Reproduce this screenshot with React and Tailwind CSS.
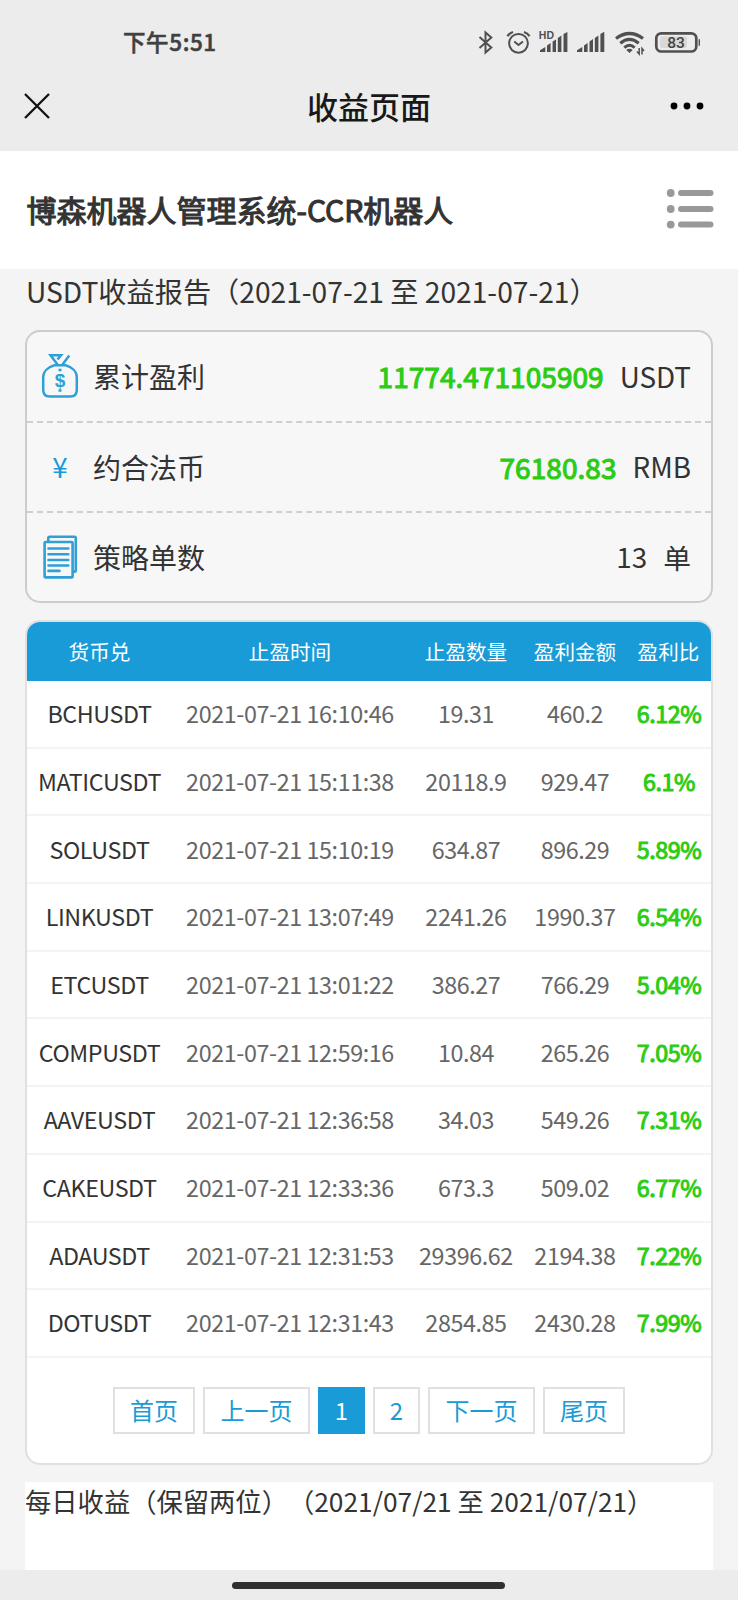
const rows = [
  ["BCHUSDT", "2021-07-21 16:10:46", "19.31", "460.2", "6.12%"],
  ["MATICUSDT", "2021-07-21 15:11:38", "20118.9", "929.47", "6.1%"],
  ["SOLUSDT", "2021-07-21 15:10:19", "634.87", "896.29", "5.89%"],
  ["LINKUSDT", "2021-07-21 13:07:49", "2241.26", "1990.37", "6.54%"],
  ["ETCUSDT", "2021-07-21 13:01:22", "386.27", "766.29", "5.04%"],
  ["COMPUSDT", "2021-07-21 12:59:16", "10.84", "265.26", "7.05%"],
  ["AAVEUSDT", "2021-07-21 12:36:58", "34.03", "549.26", "7.31%"],
  ["CAKEUSDT", "2021-07-21 12:33:36", "673.3", "509.02", "6.77%"],
  ["ADAUSDT", "2021-07-21 12:31:53", "29396.62", "2194.38", "7.22%"],
  ["DOTUSDT", "2021-07-21 12:31:43", "2854.85", "2430.28", "7.99%"],
];

function StatusIcons() {
  return (
    <svg width="230" height="32" viewBox="470 26 230 32" fill="none" stroke="#505050" className="block shrink-0">
      <path d="M479.5 37 L491.3 47.5 L485.5 52.5 V32.5 L491.3 37.5 L479.5 48" strokeWidth="2" />
      <circle cx="518.5" cy="43.3" r="9.4" strokeWidth="2" />
      <path d="M514.3 41.5 L518.5 45 L523 41.5" strokeWidth="2" />
      <path d="M507.5 36.3 Q509 33.5 513 32 M529.5 36.3 Q528 33.5 524 32" strokeWidth="2.3" />
      <text x="538.7" y="39" fontSize="10.5" fontWeight="700" fill="#505050" stroke="none" fontFamily="Liberation Sans, sans-serif" textLength="15.5">HD</text>
      <g fill="#505050" stroke="none">
        <path d="M540 52 V50.3 L545.3 47 V52 Z M547 52 V45.5 L550.6 43 V52 Z M552.6 52 V41.5 L556 39.5 V52 Z M557.8 52 V38 L561.4 35.6 V52 Z M563.5 52 V34 L567.4 32 V52 Z" />
        <path d="M577 52 V50.3 L582.3 47 V52 Z M584 52 V45.5 L587.6 43 V52 Z M589.5 52 V41.5 L593 39 V52 Z M594.8 52 V38 L598.4 35.5 V52 Z M600.4 52 V34 L604.3 31.8 V52 Z" />
      </g>
      <path d="M616 38.5 Q629.5 28.5 643 38.5" strokeWidth="3.2" />
      <path d="M620.3 43.3 Q629.5 35.5 638.7 43.3" strokeWidth="3.2" />
      <path d="M624.3 47.6 Q629.5 42.8 634.7 47.6" strokeWidth="3" />
      <path d="M626.3 50 L629.5 53 L632.7 50 Q629.5 47.5 626.3 50 Z" fill="#505050" stroke="none" />
      <path d="M639.2 48 V54 L637 51.5 M642 54.5 V48.5 L644 51" strokeWidth="1.5" />
      <rect x="656.3" y="33.3" width="40" height="18.2" rx="5" strokeWidth="2.7" />
      <rect x="660" y="36.5" width="27" height="11.5" rx="2" fill="#d8d8d8" stroke="none" />
      <text x="676" y="48.3" fontSize="15.5" fontWeight="500" textAnchor="middle" fill="#444" stroke="none" fontFamily="Roboto, sans-serif">83</text>
      <path d="M699.8 39.3 V45.7" strokeWidth="2.4" />
    </svg>
  );
}

function MoneyBag() {
  return (
    <svg width="40" height="48" viewBox="0 0 40 48" fill="none" stroke="#2f9fd6" strokeWidth="2.5" className="block">
      <path d="M14.5 13.3 C8 15 3.2 19.5 3.2 25.5 V38 Q3.2 44.6 10 44.6 H30 Q36.8 44.6 36.8 38 V25.5 C36.8 19.5 32 15 25.5 13.3 Z" />
      <path d="M17.5 12.5 L10.5 3.3 H21 L17.5 7.5 M22.5 12.5 L29.3 3.5" />
      <text x="20" y="34.8" fontSize="19" fontWeight="700" fill="#2f9fd6" stroke="none" textAnchor="middle" fontFamily="Liberation Sans, sans-serif">$</text>
      <path d="M20 16.8 V19.2 M20 37.2 V39.8" strokeWidth="3" />
    </svg>
  );
}

function Papers() {
  return (
    <svg width="40" height="48" viewBox="0 0 40 48" fill="none" stroke="#2f9fd6" strokeWidth="2.6" className="block">
      <path d="M8.3 9 V5 Q8.3 3.7 9.5 3.7 H34.5 Q35.8 3.7 35.8 5 V37.3 Q35.8 38.6 34.5 38.6 H32" />
      <rect x="4.6" y="9" width="28" height="35.4" rx="1" />
      <path d="M8.5 15.5 H28.3 M8.5 21.3 H28.3 M8.5 27 H28.3 M8.5 32.5 H28.3 M8.5 37.9 H19.5" strokeLinecap="round" />
    </svg>
  );
}

function SummaryRow({ icon, label, value, unit, green, last }) {
  return (
    <div className={"flex items-center pl-[13px] pr-[20px] " + (last ? "h-[88px]" : "h-[90.5px] border-b-2 border-dashed border-[#cfcfcf]")}>
      <div className="flex w-10 justify-center">{icon}</div>
      <div className="ml-[13px] text-[28px]">{label}</div>
      <div className="ml-auto flex items-center">
        <span className={green ? "text-[28px] tracking-[0.05px] text-[#2ccc14] [-webkit-text-stroke:1.1px_#2ccc14]" : "text-[27.8px]"}>{value}</span>
        <span className="ml-[16px] pt-px text-[27.8px]">{unit}</span>
      </div>
    </div>
  );
}

const cols = "grid grid-cols-[145px_236px_116px_102px_85px] items-center text-center";

function PageButton({ children, width, active }) {
  return (
    <div className={"flex h-[47px] items-center justify-center text-[24px] " + width + (active ? " bg-[#189bd6] text-white" : " border-2 border-[#e0e0e0] text-[#189bd6]")}>
      {children}
    </div>
  );
}

export default function App() {
  return (
    <div className="flex h-[1600px] w-[738px] flex-col overflow-hidden bg-[#f4f4f4] font-['Noto_Sans_CJK_SC',sans-serif] leading-none whitespace-nowrap text-[#333]">
      <header className="h-[151px] shrink-0 bg-[#ececec]">
        <div className="flex h-[84px] items-end justify-between pr-[38px] pb-[26px] pl-[123px]">
          <div className="flex h-8 items-center pb-[2px] text-[22.5px] font-medium tracking-[0.6px] text-[#404040] [-webkit-text-stroke:0.5px_#404040]">下午5:51</div>
          <StatusIcons />
        </div>
        <div className="grid h-[44px] grid-cols-[1fr_auto_1fr] items-center px-[24px]">
          <svg width="26" height="26" viewBox="0 0 26 26" stroke="#111" strokeWidth="2.3" fill="none"><path d="M1 1 L25 25 M25 1 L1 25" /></svg>
          <div className="pb-[2px] text-[31px] font-medium text-[#181818]">收益页面</div>
          <svg width="34" height="8" viewBox="0 0 34 8" className="mr-[10px] justify-self-end" fill="#000"><circle cx="4" cy="4" r="3.4" /><circle cx="17" cy="4" r="3.4" /><circle cx="30" cy="4" r="3.4" /></svg>
        </div>
      </header>

      <section className="flex h-[118px] shrink-0 items-center justify-between bg-white pr-[24px] pb-[2px] pl-[26.5px]">
        <h1 className="text-[30px] font-normal [-webkit-text-stroke:1.1px_#333]">博森机器人管理系统-CCR机器人</h1>
        <svg width="48" height="40" viewBox="0 0 48 40" fill="#999" className="block">
          <circle cx="4.7" cy="4" r="3.9" /><rect x="12" y="1" width="35.5" height="6" rx="3" />
          <circle cx="4.7" cy="20" r="3.9" /><rect x="12" y="17" width="35.5" height="6" rx="3" />
          <circle cx="4.7" cy="35.6" r="3.9" /><rect x="12" y="32.6" width="35.5" height="6" rx="3" />
        </svg>
      </section>

      <main className="flex min-h-0 flex-1 flex-col px-[25px]">
        <h2 className="flex h-[61px] shrink-0 items-start pt-[8px] pl-px text-[28.2px]">USDT收益报告（2021-07-21 至 2021-07-21）</h2>
        <div className="shrink-0 rounded-[15px] border-2 border-[#cccccc] bg-[#f7f7f7]">
          <SummaryRow icon={<MoneyBag />} label="累计盈利" value="11774.471105909" unit="USDT" green />
          <SummaryRow icon={<span className="pt-px text-[27.8px] text-[#189bd6]">¥</span>} label="约合法币" value="76180.83" unit="RMB" green />
          <SummaryRow icon={<Papers />} label="策略单数" value="13" unit="单" last />
        </div>

        <div className="mt-[17px] h-[845px] shrink-0 overflow-hidden rounded-[15px] border-2 border-[#e0e0e0] bg-white">
          <div className={cols + " h-[59px] bg-[#189bd6] text-[20.6px] text-white"}>
            <div>货币兑</div><div>止盈时间</div><div>止盈数量</div><div>盈利金额</div><div>盈利比</div>
          </div>
          {rows.map((r) => (
            <div key={r[0]} className={cols + " h-[67.7px] border-b-2 border-[#f4f4f4] text-[23.3px] tracking-[-0.4px] text-[#666]"}>
              <div className="text-[#333]">{r[0]}</div>
              <div>{r[1]}</div>
              <div>{r[2]}</div>
              <div>{r[3]}</div>
              <div className="pl-px text-[#2ccc14] [-webkit-text-stroke:1px_#2ccc14]">{r[4]}</div>
            </div>
          ))}
          <div className="mt-[29px] flex justify-center gap-[8px]">
            <PageButton width="w-[82px]">首页</PageButton>
            <PageButton width="w-[107px]">上一页</PageButton>
            <PageButton width="w-[47px]" active>1</PageButton>
            <PageButton width="w-[47px]">2</PageButton>
            <PageButton width="w-[107px]">下一页</PageButton>
            <PageButton width="w-[82px]">尾页</PageButton>
          </div>
        </div>

        <div className="mt-[17px] flex-1 bg-white pt-[6px] text-[26.3px] [text-spacing-trim:space-all]">每日收益（保留两位）（2021/07/21 至 2021/07/21）</div>
      </main>

      <footer className="flex h-[30px] shrink-0 items-center justify-center bg-[#ececec] pr-px">
        <div className="h-[7px] w-[273px] rounded-full bg-[#303030]" />
      </footer>
    </div>
  );
}
